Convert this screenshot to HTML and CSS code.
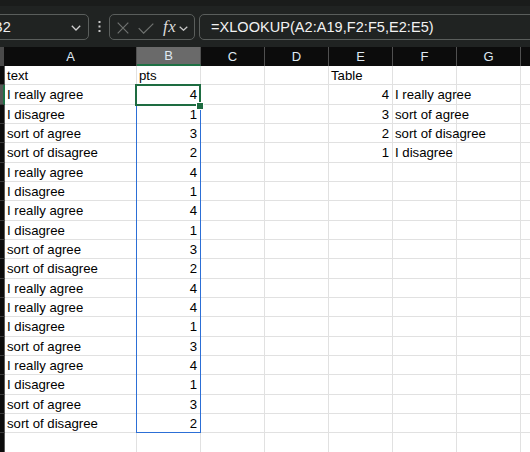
FILE: index.html
```html
<!DOCTYPE html>
<html>
<head>
<meta charset="utf-8">
<link rel="stylesheet" href="styles.css">
</head>
<body>
<div class="top"></div>
<div class="toolbar">
  <div class="box namebox"><span class="nb-text">B2</span>
    <svg class="chev" width="10" height="6" viewBox="0 0 10 6"><path d="M0.8 0.8 L5 5 L9.2 0.8" fill="none" stroke="#d0d0d0" stroke-width="1.3"/></svg>
  </div>
  <div class="dots">
    <svg width="3" height="12" viewBox="0 0 3 12"><rect x="0.5" y="0" width="2" height="2" fill="#c8c8c8"/><rect x="0.5" y="4.5" width="2" height="2" fill="#c8c8c8"/><rect x="0.5" y="9" width="2" height="2" fill="#c8c8c8"/></svg>
  </div>
  <div class="box btnbox">
    <svg class="ic-x" width="12" height="12" viewBox="0 0 12 12"><path d="M0.7 0.7 L11.3 11.3 M11.3 0.7 L0.7 11.3" stroke="#6f7270" stroke-width="1.2" fill="none"/></svg>
    <svg class="ic-ok" width="16" height="11" viewBox="0 0 16 11"><path d="M0.7 5.2 L5.6 10.2 L15.3 0.6" stroke="#6f7270" stroke-width="1.2" fill="none"/></svg>
    <span class="fx">fx</span>
    <svg class="chev2" width="9" height="5" viewBox="0 0 9 5"><path d="M0.7 0.7 L4.5 4.3 L8.3 0.7" fill="none" stroke="#c8c8c8" stroke-width="1.2"/></svg>
  </div>
  <div class="box formula">=XLOOKUP(A2:A19,F2:F5,E2:E5)</div>
</div>
<div class="sheet">
  <div class="corner"></div><div class="hd">A</div><div class="hd sel">B</div><div class="hd">C</div><div class="hd">D</div><div class="hd">E</div><div class="hd">F</div><div class="hd">G</div><div class="hd"></div>

  <div class="rh"></div><div class="c">text</div><div class="c">pts</div><div class="c"></div><div class="c"></div><div class="c">Table</div><div class="c"></div><div class="c"></div><div class="c"></div>
  <div class="rh rh-sel"></div><div class="c">I really agree</div><div class="c n">4</div><div class="c"></div><div class="c"></div><div class="c n">4</div><div class="c">I really agree</div><div class="c"></div><div class="c"></div>
  <div class="rh"></div><div class="c">I disagree</div><div class="c n">1</div><div class="c"></div><div class="c"></div><div class="c n">3</div><div class="c">sort of agree</div><div class="c"></div><div class="c"></div>
  <div class="rh"></div><div class="c">sort of agree</div><div class="c n">3</div><div class="c"></div><div class="c"></div><div class="c n">2</div><div class="c">sort of disagree</div><div class="c"></div><div class="c"></div>
  <div class="rh"></div><div class="c">sort of disagree</div><div class="c n">2</div><div class="c"></div><div class="c"></div><div class="c n">1</div><div class="c">I disagree</div><div class="c"></div><div class="c"></div>
  <div class="rh"></div><div class="c">I really agree</div><div class="c n">4</div><div class="c"></div><div class="c"></div><div class="c"></div><div class="c"></div><div class="c"></div><div class="c"></div>
  <div class="rh"></div><div class="c">I disagree</div><div class="c n">1</div><div class="c"></div><div class="c"></div><div class="c"></div><div class="c"></div><div class="c"></div><div class="c"></div>
  <div class="rh"></div><div class="c">I really agree</div><div class="c n">4</div><div class="c"></div><div class="c"></div><div class="c"></div><div class="c"></div><div class="c"></div><div class="c"></div>
  <div class="rh"></div><div class="c">I disagree</div><div class="c n">1</div><div class="c"></div><div class="c"></div><div class="c"></div><div class="c"></div><div class="c"></div><div class="c"></div>
  <div class="rh"></div><div class="c">sort of agree</div><div class="c n">3</div><div class="c"></div><div class="c"></div><div class="c"></div><div class="c"></div><div class="c"></div><div class="c"></div>
  <div class="rh"></div><div class="c">sort of disagree</div><div class="c n">2</div><div class="c"></div><div class="c"></div><div class="c"></div><div class="c"></div><div class="c"></div><div class="c"></div>
  <div class="rh"></div><div class="c">I really agree</div><div class="c n">4</div><div class="c"></div><div class="c"></div><div class="c"></div><div class="c"></div><div class="c"></div><div class="c"></div>
  <div class="rh"></div><div class="c">I really agree</div><div class="c n">4</div><div class="c"></div><div class="c"></div><div class="c"></div><div class="c"></div><div class="c"></div><div class="c"></div>
  <div class="rh"></div><div class="c">I disagree</div><div class="c n">1</div><div class="c"></div><div class="c"></div><div class="c"></div><div class="c"></div><div class="c"></div><div class="c"></div>
  <div class="rh"></div><div class="c">sort of agree</div><div class="c n">3</div><div class="c"></div><div class="c"></div><div class="c"></div><div class="c"></div><div class="c"></div><div class="c"></div>
  <div class="rh"></div><div class="c">I really agree</div><div class="c n">4</div><div class="c"></div><div class="c"></div><div class="c"></div><div class="c"></div><div class="c"></div><div class="c"></div>
  <div class="rh"></div><div class="c">I disagree</div><div class="c n">1</div><div class="c"></div><div class="c"></div><div class="c"></div><div class="c"></div><div class="c"></div><div class="c"></div>
  <div class="rh"></div><div class="c">sort of agree</div><div class="c n">3</div><div class="c"></div><div class="c"></div><div class="c"></div><div class="c"></div><div class="c"></div><div class="c"></div>
  <div class="rh"></div><div class="c">sort of disagree</div><div class="c n">2</div><div class="c"></div><div class="c"></div><div class="c"></div><div class="c"></div><div class="c"></div><div class="c"></div>
  <div class="rh"></div><div class="c"></div><div class="c"></div><div class="c"></div><div class="c"></div><div class="c"></div><div class="c"></div><div class="c"></div><div class="c"></div>

  <div class="spill"></div>
  <div class="active"></div>
  <div class="handle"></div>
</div>
</body>
</html>
```
FILE: styles.css
```css
html, body {
  margin: 0;
  padding: 0;
}
body {
  width: 530px;
  height: 452px;
  overflow: hidden;
  background: #ffffff;
  font-family: "Liberation Sans", Arial, sans-serif;
}
.top {
  height: 6px;
  background: #1a1c1b;
}
.toolbar {
  height: 41px;
  box-sizing: border-box;
  padding-top: 8px;
  background: #202322;
  display: flex;
  align-items: flex-start;
  overflow: hidden;
}
.box {
  height: 26px;
  box-sizing: border-box;
  border: 1px solid #5a5e5c;
  border-radius: 5px;
  display: flex;
  align-items: center;
  flex-shrink: 0;
}
.namebox {
  margin-left: -20px;
  width: 109px;
  padding-left: 12px;
  padding-right: 7px;
  color: #f0f0f0;
  font-size: 14.5px;
}
.nb-text {
  flex: 1;
}
.chev {
  margin-top: 1px;
}
.dots {
  width: 20px;
  height: 26px;
  display: flex;
  align-items: center;
  justify-content: center;
  flex-shrink: 0;
}
.btnbox {
  width: 86px;
  padding-left: 7px;
}
.ic-x {
  margin-top: 1px;
}
.ic-ok {
  margin-left: 9px;
  margin-top: 3px;
}
.fx {
  margin-left: 9px;
  font-family: "Liberation Serif", "Times New Roman", serif;
  font-style: italic;
  font-size: 17px;
  color: #dcdcdc;
  letter-spacing: 0.5px;
}
.chev2 {
  margin-left: 3px;
  margin-top: 2px;
}
.formula {
  margin-left: 4px;
  flex: 1;
  margin-right: -20px;
  padding-left: 11px;
  color: #f2f2f2;
  font-size: 14.5px;
  letter-spacing: 0.05px;
}
.sheet {
  position: relative;
  display: grid;
  grid-template-columns: 5px 132px repeat(7, 64px);
  grid-template-rows: 19px;
  grid-auto-rows: 19.333px;
  font-size: 13px;
  color: #000;
}
.corner {
  background: #4a4a4a;
  border-right: 1px solid #0c0c0c;
  box-sizing: border-box;
}
.hd {
  background: #0c0c0c;
  color: #dfe9f3;
  border-right: 1px solid #505050;
  box-sizing: border-box;
  text-align: center;
  line-height: 19px;
  font-size: 13px;
}
.hd.sel {
  background: #6a6a6a;
  border-bottom: 2px solid #1e7145;
  line-height: 18px;
}
.rh {
  background: #0c0c0c;
  border-right: 1px solid #5a5a5a;
  border-bottom: 1px solid #3a3a3a;
  box-sizing: border-box;
}
.rh.rh-sel {
  background: #555;
  border-right: 2px solid #1e7145;
}
.c {
  border-right: 1px solid #e1e1e1;
  border-bottom: 1px solid #e1e1e1;
  box-sizing: border-box;
  padding: 1px 3px 0 2px;
  line-height: 18.5px;
  white-space: nowrap;
  overflow: visible;
  font-size: 13.2px;
}
.c.n {
  text-align: right;
}
.spill {
  position: absolute;
  left: 136px;
  top: 38.33px;
  width: 65px;
  height: 348px;
  border: 1px solid #2c6fd6;
  box-sizing: border-box;
  pointer-events: none;
}
.active {
  position: absolute;
  left: 135px;
  top: 37px;
  width: 66px;
  height: 22px;
  border: 2px solid #1e6c41;
  box-sizing: border-box;
}
.handle {
  position: absolute;
  left: 196px;
  top: 55px;
  width: 6px;
  height: 6px;
  background: #1e6c41;
  border: 1px solid #ffffff;
}
```
